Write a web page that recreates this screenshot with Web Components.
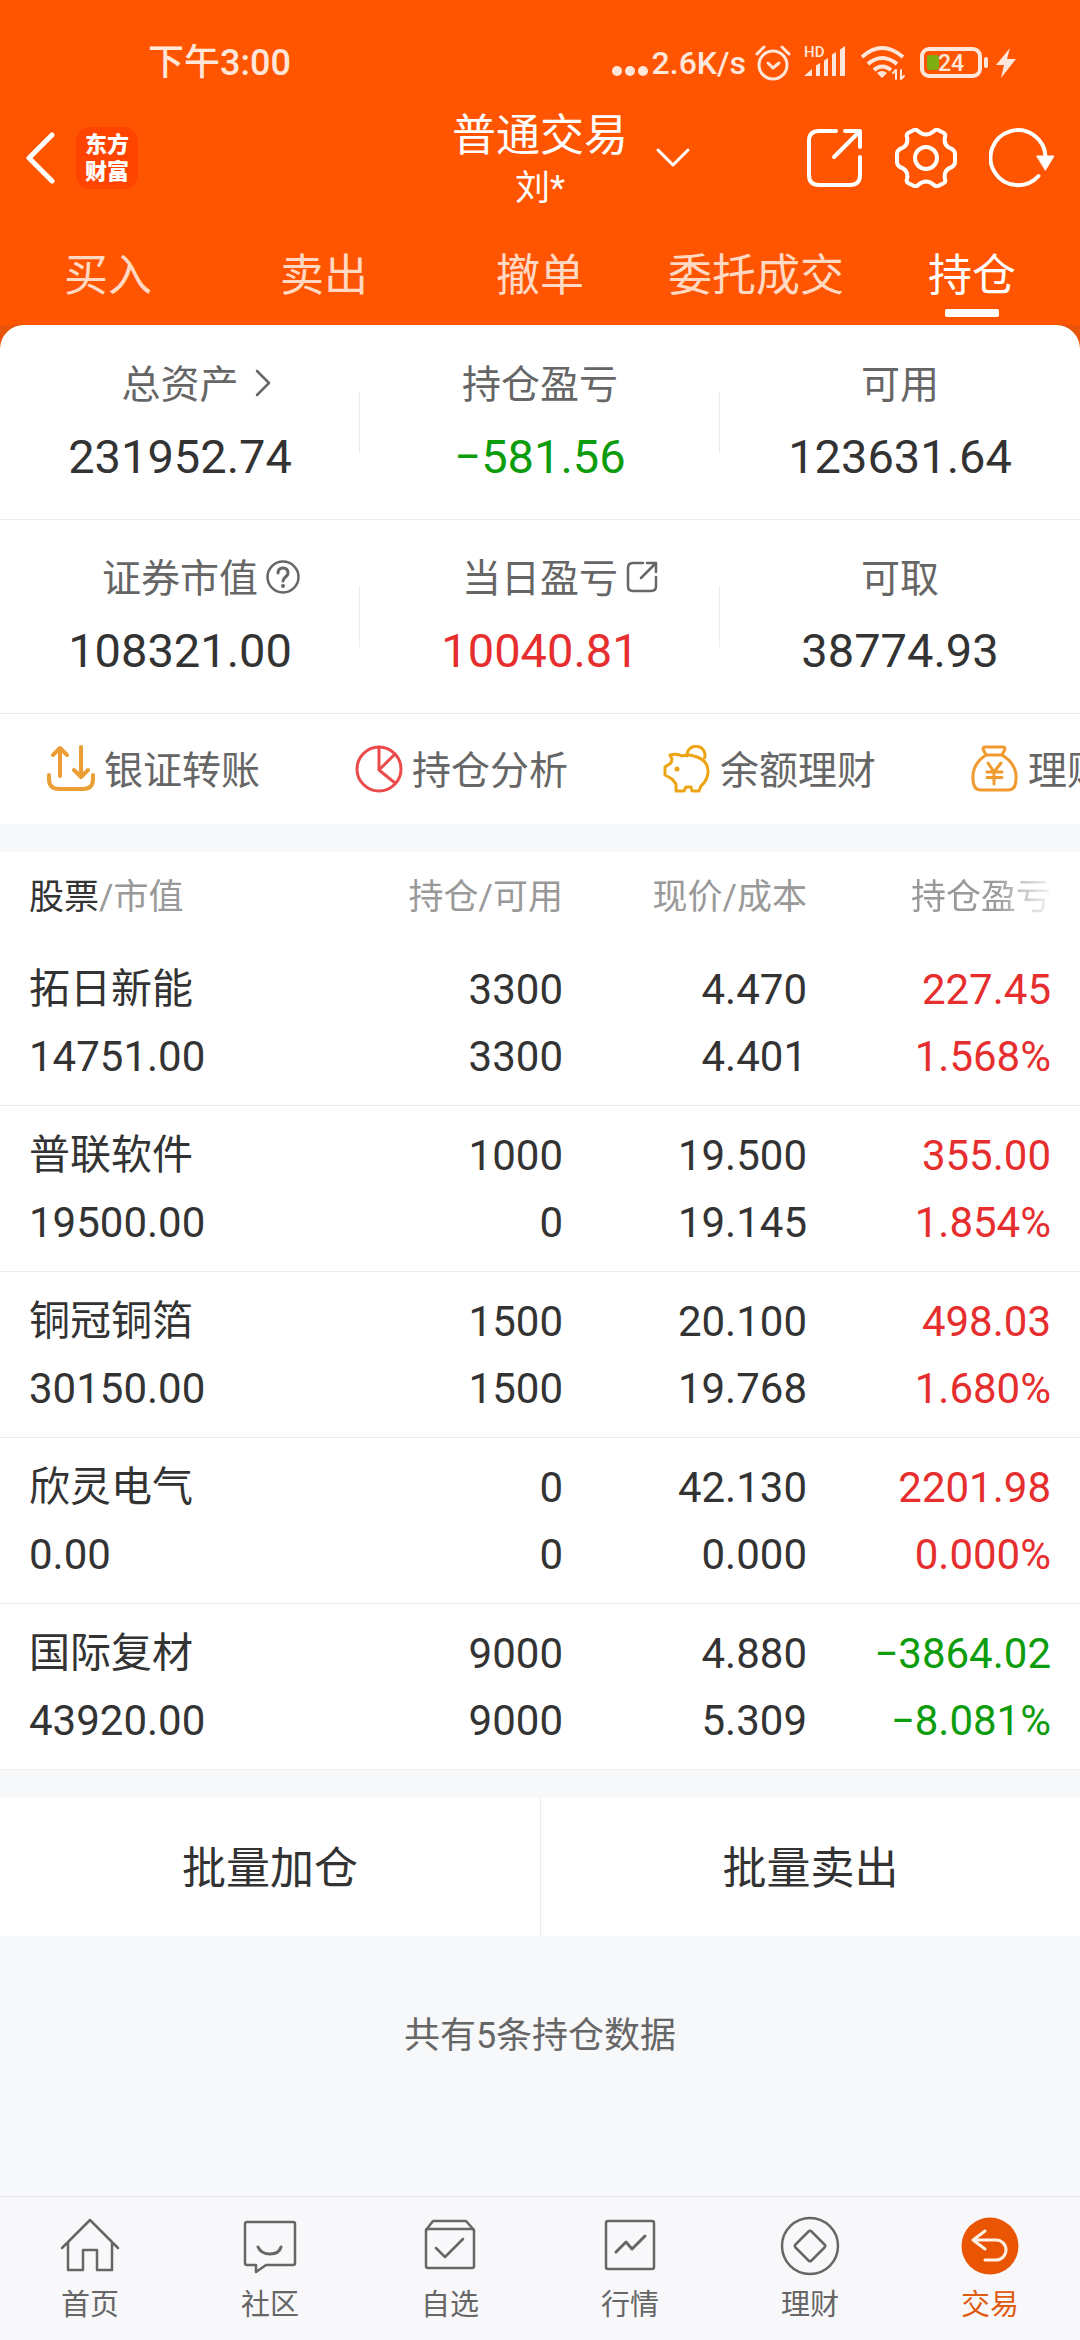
<!DOCTYPE html>
<html lang="zh-CN">
<head>
<meta charset="utf-8">
<meta name="viewport" content="width=device-width, initial-scale=1">
<title>普通交易 - 持仓</title>
<style>
  html, body { margin: 0; padding: 0; }
  body {
    font-family: Roboto, "Noto Sans CJK SC", sans-serif;
    background: #f7f8fa;
    color: #333;
    --brand: #ff5500;
    --line: #ececec;
    --up: #e62e2e;
    --down: #0c9c0c;
    --muted: #666;
    --faint: #999;
  }
</style>
</head>
<body>
<trade-app></trade-app>

<script>
const ICONS = {
  back: [30, 52, '<path d="M27 3 4 26 27 49" stroke-width="5"/>'],
  down: [34, 20, '<path d="M2 2 17 17 32 2" stroke-width="3"/>'],
  share: [56, 60, '<path d="M29 3H12Q2 3 2 13V47Q2 57 12 57H43Q53 57 53 47V29M38 3H53V19M52 4 27 29" stroke-width="4"/>'],
  gear: [62, 60, '<path d="M23 3Q31 10 39 3Q41 1 43 2L49 5Q51 6.5 50 9Q48 18 57 21Q60 23 60 26V34Q60 37 57 39Q48 42 50 51Q51 53.5 49 55L43 58Q41 59 39 57Q31 50 23 57Q21 59 19 58L13 55Q11 53.5 12 51Q14 42 5 39Q2 37 2 34V26Q2 23 5 21Q14 18 12 9Q11 6.5 13 5L19 2Q21 1 23 3Z" stroke-width="4"/><circle cx="31" cy="30" r="11" stroke-width="4"/>'],
  refresh: [66, 60, '<path d="M49.5 48A27.5 27.5 0 1 1 56.5 29" stroke-width="4"/><path d="M48 28H65L56.500 42Z" fill="currentColor" stroke-width="1"/>'],
  dots: [36, 34, '<g fill="currentColor" stroke="none"><circle cx="5" cy="25" r="5"/><circle cx="18" cy="25" r="5"/><circle cx="31" cy="25" r="5"/></g>'],
  alarm: [36, 36, '<circle cx="18" cy="20" r="14" stroke-width="3"/><path d="M13 18 18 23 24 18" stroke-width="3"/><path d="M2 9 9 2M34 9 27 2" stroke-width="3"/>'],
  signal: [42, 42, '<g transform="translate(0 4)" fill="currentColor" stroke="none"><path d="M0 30 8 23V30ZM12 19.500 16 17V30H12ZM20 14.500 24 12V30H20ZM28 8.500 32 6V30H28ZM36 3.500 41 0V30H36Z"/><text x="0" y="11" font-size="15" font-weight="500">HD</text></g>'],
  wifi: [44, 36, '<g stroke-width="4" stroke-linecap="butt"><path d="M1 12Q21-6 42 12M7 19Q21 7 36 19M13 25Q21 18 30 25"/></g><path d="M16 28Q21 24 26 28L21 33Z" fill="currentColor" stroke="none"/><path d="M35 34V25L32 28M40 25V34L43 31" stroke-width="2"/>'],
  battery: [70, 32, '<rect x="2" y="2" width="58" height="27" rx="7" stroke-width="4"/><rect x="7" y="8" width="12" height="15" rx="3" fill="#7fae12" stroke="none"/><path d="M66 12V19" stroke-width="4"/><text x="18" y="24" font-size="23" font-weight="500" fill="currentColor" stroke="none">24</text>'],
  bolt: [20, 32, '<path d="M14 1 0 18H8L5 31 20 12H11Z" fill="currentColor" stroke="none"/>'],
  chevron: [16, 28, '<path d="M2 2 14 14 2 26" stroke-width="2.500"/>'],
  help: [34, 34, '<circle cx="17" cy="17" r="15.500" stroke-width="2.500"/><path d="M12 13Q12 8 17 8T22 13Q22 15 19.500 17T17 21" stroke-width="3"/><circle cx="17" cy="26" r="2" fill="currentColor" stroke="none"/>'],
  open: [32, 32, '<path d="M17 2H7Q2 2 2 7V25Q2 30 7 30H25Q30 30 30 25V16M21 2H30V11M30 2 15 17" stroke-width="2.500"/>'],
  transfer: [48, 48, '<path d="M13 31V3M6 10 13 3 20 10M34 2V31M27 25 34 32 41 25M2 30V34Q2 44 12 44H36Q46 44 46 34V30" stroke="#eb9e36" stroke-width="4"/>'],
  pie: [48, 48, '<g stroke="#ec4b4b" stroke-width="3"><circle cx="24" cy="24" r="22"/><path d="M24 2V25L40 9M24 25 40 38"/></g>'],
  pig: [48, 48, '<g stroke="#eca414" stroke-width="3"><path d="M24 11A9 9 0 1 1 41.500 13"/><path d="M7 10Q14 8 19 11Q25 9 31 11Q46 15 45 28Q44 36 38 41L36 46H29L28 42H23L21 46H13V39L9 34 2 30V22L8 18 9 14Z"/></g><circle cx="14" cy="24" r="2.500" fill="#eca414" stroke="none"/>'],
  bag: [48, 48, '<g stroke="#f09a30" stroke-width="3"><path d="M15 10 12 4Q12 2 14 2H32Q34 2 34 4L31 10Z"/><path d="M15 10Q1 19 2 34Q2 45 10 45H37Q45 45 45 34Q46 19 31 10"/><path d="M17 18 23 27 30 18M23 27V39M16 27H31M16 32.500H31"/></g>'],
  home: [60, 60, '<path d="M2 32 30 4 58 32M8 26V54H23V34H37V54H52V26"/>'],
  chat: [60, 60, '<path d="M7 6H53Q55 6 55 8V47Q55 49 53 49H26L16 56V49H7Q5 49 5 47V8Q5 6 7 6Z"/><path d="M18 31Q21 38 30 38T41 31" stroke-width="3"/>'],
  check: [60, 60, '<rect x="6" y="13" width="48" height="39" rx="2"/><path d="M6 14 13 5H46L54 14M16 32 25 41 43 23"/>'],
  trend: [60, 60, '<rect x="6" y="5" width="48" height="48" rx="2"/><path d="M16 36 26 26 32 33 45 20" stroke-width="3"/>'],
  gem: [60, 60, '<circle cx="30" cy="30" r="28"/><path d="M28.500 15.500Q30 14 31.500 15.500L44.500 28.500Q46 30 44.500 31.500L31.500 44.500Q30 46 28.500 44.500L15.500 31.500Q14 30 15.500 28.500Z"/>'],
  trade: [60, 60, '<circle cx="30" cy="30" r="28.500" fill="#ea5504" stroke="none"/><path d="M25 44H36A10 10 0 0 0 36 24H13M25 15 13 24 25 33" stroke="#fff0e6" stroke-width="3"/>']
};

function define(name, template, setup) {
  customElements.define(name, class extends HTMLElement {
    connectedCallback() {
      if (this.shadowRoot) return;
      const root = this.attachShadow({ mode: 'open' });
      root.innerHTML = typeof template === 'function' ? template(this) : template;
      if (setup) setup(root, this);
    }
  });
}

define('app-icon', host => {
  const [w, h, body] = ICONS[host.getAttribute('name')];
  return `<style>:host{display:block;flex:none}svg{display:block}</style>
    <svg width="${w}" height="${h}" viewBox="0 0 ${w} ${h}" fill="none" stroke="currentColor"
      stroke-width="2.500" stroke-linecap="round" stroke-linejoin="round" aria-hidden="true">${body}</svg>`;
});

define('status-bar', `
  <style>
    :host{display:flex;align-items:center;justify-content:space-between;height:86px;
      padding:20px 64px 0 148px;color:#ffe6da;font-weight:500}
    .time{font-size:36px;line-height:48px}
    .tray{display:flex;align-items:center}
    .rate{font-size:32px;line-height:48px;margin:0 9px 0 4px}
    .gap{margin-right:13px}
    .wide{margin-right:15px}
    .thin{margin-right:6px}
  </style>
  <span class="time">下午3:00</span>
  <div class="tray">
    <app-icon name="dots"></app-icon><span class="rate">2.6K/s</span>
    <app-icon class="gap" name="alarm"></app-icon>
    <app-icon class="wide" name="signal"></app-icon>
    <app-icon class="wide" name="wifi"></app-icon>
    <app-icon class="thin" name="battery"></app-icon>
    <app-icon name="bolt"></app-icon>
  </div>`);

define('title-bar', `
  <style>
    :host{display:grid;grid-template-columns:1fr auto 1fr;align-items:center;padding:0 25px;color:#fff}
    button{all:unset;display:block;cursor:pointer}
    .side{display:flex;align-items:center;padding-bottom:2px}
    .logo{display:flex;flex-direction:column;justify-content:center;width:62px;height:62px;margin-left:21px;
      border-radius:14px;background:#ff4400;text-align:center;font-size:22px;line-height:27px;font-weight:900}
    h1{margin:0;font-size:44px;line-height:60px;font-weight:400;text-align:center}
    p{margin:0;font-size:35px;line-height:46px;text-align:center}
    .switch{margin:0 auto 0 28px}
    .tools{display:flex;gap:32px}
  </style>
  <div class="side">
    <button aria-label="返回"><app-icon name="back"></app-icon></button>
    <div class="logo"><span>东方</span><span>财富</span></div>
  </div>
  <div><h1>普通交易</h1><p>刘*</p></div>
  <div class="side">
    <button class="switch" aria-label="切换账户"><app-icon name="down"></app-icon></button>
    <div class="tools">
      <button aria-label="分享"><app-icon name="share"></app-icon></button>
      <button aria-label="设置"><app-icon name="gear"></app-icon></button>
      <button aria-label="刷新"><app-icon name="refresh"></app-icon></button>
    </div>
  </div>`);

define('trade-tabs', `
  <style>
    :host{display:block}
    nav{display:grid;grid-template-columns:repeat(5,1fr);padding:32px 0 8px}
    a{display:flex;flex-direction:column;align-items:center;gap:1px;color:#ffd9c4;text-decoration:none;
      font-size:44px;line-height:64px;white-space:nowrap}
    a::after{content:"";width:54px;height:8px;border-radius:2px}
    a[aria-current]{color:#fff}
    a[aria-current]::after{background:#fff}
  </style>
  <nav>
    <a href="#buy">买入</a><a href="#sell">卖出</a><a href="#cancel">撤单</a>
    <a href="#orders">委托成交</a><a href="#holdings" aria-current="page">持仓</a>
  </nav>`);

define('asset-cell', host => {
  const icon = host.getAttribute('icon');
  return `<style>
    :host{display:block;box-sizing:border-box;height:194px;padding-top:31px;border-bottom:1px solid var(--line)}
    .label{display:grid;grid-template-columns:1fr auto 1fr;align-items:center;column-gap:8px;
      font-size:39px;line-height:56px;color:var(--muted)}
    .label span{grid-column:2}
    app-icon{padding-bottom:4px}
    app-icon[name=chevron]{margin-left:8px}
    .value{display:block;font-size:47px;line-height:60px;padding-top:14px;text-align:center;color:#333}
    :host([tone=up]) .value{color:var(--up)}
    :host([tone=down]) .value{color:var(--down)}
    .box{height:134px;position:relative}
    :host([divided]) .box::after{content:"";position:absolute;right:0;top:35px;width:1px;height:61px;background:var(--line)}
  </style>
  <div class="box">
    <div class="label"><span>${host.getAttribute('label')}</span>${icon ? `<app-icon name="${icon}"></app-icon>` : ''}</div>
    <span class="value"><slot></slot></span>
  </div>`;
});

define('asset-summary', `
  <style>
    :host{display:block;background:#e8530a}
    .grid{display:grid;grid-template-columns:repeat(3,1fr);background:#fff;border-radius:24px 24px 0 0;padding-top:1px}
  </style>
  <div class="grid">
    <asset-cell label="总资产" icon="chevron" divided>231952.74</asset-cell>
    <asset-cell label="持仓盈亏" tone="down" divided>−581.56</asset-cell>
    <asset-cell label="可用">123631.64</asset-cell>
    <asset-cell label="证券市值" icon="help" divided>108321.00</asset-cell>
    <asset-cell label="当日盈亏" icon="open" tone="up" divided>10040.81</asset-cell>
    <asset-cell label="可取">38774.93</asset-cell>
  </div>`);

define('quick-links', `
  <style>
    :host{display:block;overflow:hidden;background:#fff}
    nav{display:flex;padding-left:47px}
    a{display:flex;align-items:center;gap:9px;flex:0 0 308px;height:110px;color:var(--muted);
      text-decoration:none;font-size:39px;line-height:56px;white-space:nowrap}
    span{padding-top:4px}
  </style>
  <nav>
    <a href="#transfer"><app-icon name="transfer"></app-icon><span>银证转账</span></a>
    <a href="#analysis"><app-icon name="pie"></app-icon><span>持仓分析</span></a>
    <a href="#balance"><app-icon name="pig"></app-icon><span>余额理财</span></a>
    <a href="#wealth"><app-icon name="bag"></app-icon><span>理财</span></a>
  </nav>`);

const HOLDINGS = [
  ['拓日新能', '14751.00', '3300', '3300', '4.470', '4.401', '227.45', '1.568%'],
  ['普联软件', '19500.00', '1000', '0', '19.500', '19.145', '355.00', '1.854%'],
  ['铜冠铜箔', '30150.00', '1500', '1500', '20.100', '19.768', '498.03', '1.680%'],
  ['欣灵电气', '0.00', '0', '0', '42.130', '0.000', '2201.98', '0.000%'],
  ['国际复材', '43920.00', '9000', '9000', '4.880', '5.309', '−3864.02', '−8.081%']
];

define('holdings-table', () => `
  <style>
    :host{display:block;background:#fff;margin-top:28px}
    table{width:100%;border-collapse:separate;border-spacing:0;table-layout:fixed}
    th{box-sizing:border-box;height:88px;padding:4px 0 0;font-size:35px;line-height:48px;font-weight:400;color:var(--faint);text-align:right;white-space:nowrap}
    th:first-child,td:first-child{text-align:left;padding-left:29px}
    th:last-child,td:last-child{padding-right:29px}
    th b{font-weight:400;color:#333}
    .mid{width:244px}
    .end{width:273px}
    .fade{-webkit-mask-image:linear-gradient(to right,#000 60%,rgba(0,0,0,.1));mask-image:linear-gradient(to right,#000 60%,rgba(0,0,0,.1))}
    td{padding:16px 0 15px;border-bottom:1px solid var(--line);text-align:right;font-size:42px;line-height:67px;color:#333}
    td span{display:block}
    .up{color:var(--up)}
    .down{color:var(--down)}
    td .name{font-size:41px}
  </style>
  <table>
    <thead><tr>
      <th scope="col"><b>股票</b>/市值</th><th class="mid" scope="col">持仓/可用</th>
      <th class="mid" scope="col">现价/成本</th><th class="end" scope="col"><span class="fade">持仓盈亏</span></th>
    </tr></thead>
    <tbody>${HOLDINGS.map(r => `<tr>
      <td><span class="name">${r[0]}</span><span>${r[1]}</span></td>
      <td><span>${r[2]}</span><span>${r[3]}</span></td>
      <td><span>${r[4]}</span><span>${r[5]}</span></td>
      <td class="${r[6].startsWith('−') ? 'down' : 'up'}"><span>${r[6]}</span><span>${r[7]}</span></td>
    </tr>`).join('')}</tbody>
  </table>`);

define('batch-actions', `
  <style>
    :host{display:grid;grid-template-columns:1fr 1fr;margin-top:28px;background:#fff}
    button{appearance:none;border:0;margin:0;padding:4px 0 0;background:none;height:138px;font-family:inherit;
      font-size:44px;line-height:64px;color:#333}
    button+button{border-left:1px solid var(--line)}
  </style>
  <button>批量加仓</button><button>批量卖出</button>`);

define('nav-item', host => `
  <style>
    :host{display:block}
    a{display:flex;flex-direction:column;align-items:center;gap:9px;padding:19px 0 15px;color:var(--muted);
      text-decoration:none;font-size:29px;line-height:40px}
    :host([active]) a{color:#e05a10}
  </style>
  <a href="#${host.getAttribute('icon')}"><app-icon name="${host.getAttribute('icon')}"></app-icon><span><slot></slot></span></a>`);

define('bottom-nav', `
  <style>
    :host{display:grid;grid-template-columns:repeat(6,1fr);margin-top:auto;background:#f8f8fa;border-top:1px solid #e2e2e4}
  </style>
  <nav-item icon="home">首页</nav-item><nav-item icon="chat">社区</nav-item>
  <nav-item icon="check">自选</nav-item><nav-item icon="trend">行情</nav-item>
  <nav-item icon="gem">理财</nav-item><nav-item icon="trade" active>交易</nav-item>`);

define('trade-app', `
  <style>
    :host{display:flex;flex-direction:column;min-height:100vh}
    header{background:var(--brand)}
    p{margin:0;padding:74px 0;text-align:center;font-size:36px;line-height:52px;color:var(--muted)}
  </style>
  <header><status-bar></status-bar><title-bar></title-bar><trade-tabs></trade-tabs></header>
  <asset-summary></asset-summary>
  <quick-links></quick-links>
  <holdings-table></holdings-table>
  <batch-actions></batch-actions>
  <p>共有5条持仓数据</p>
  <bottom-nav></bottom-nav>`);
</script>
</body>
</html>
